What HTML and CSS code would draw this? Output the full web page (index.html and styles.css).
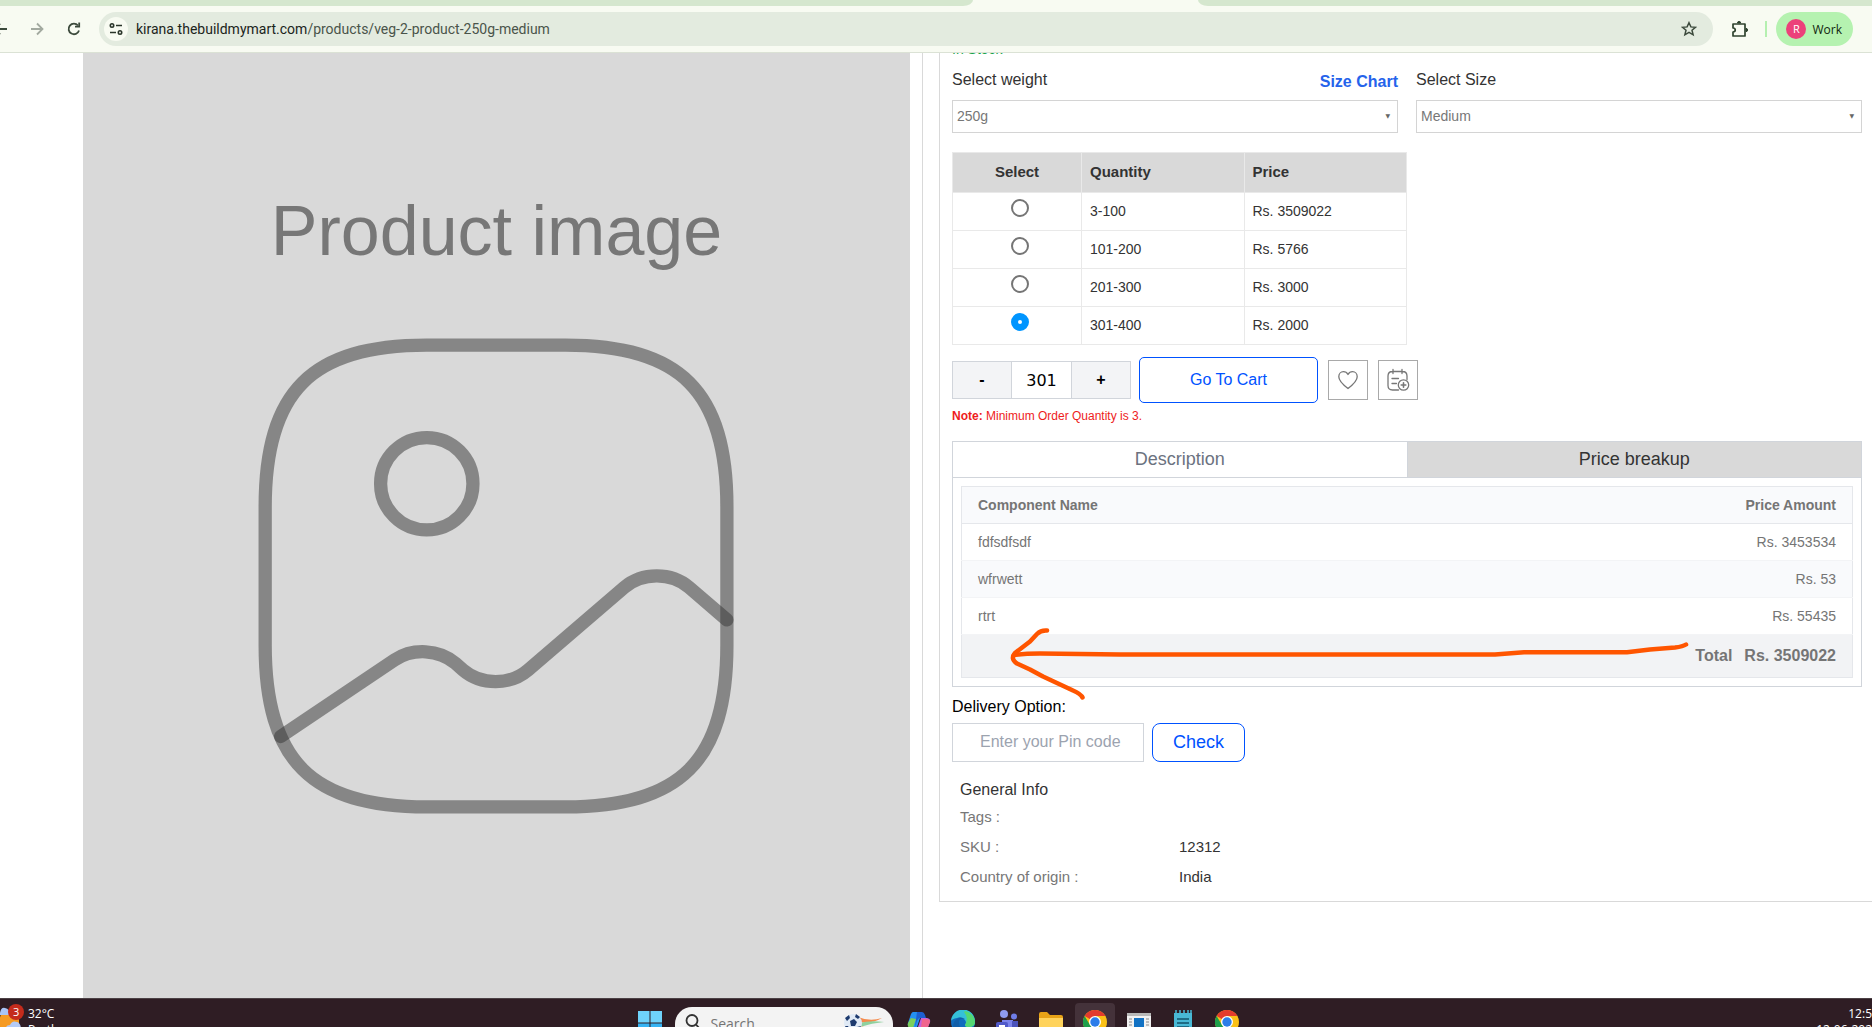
FILE: index.html
```html
<!DOCTYPE html>
<html lang="en">
<head>
    <meta charset="UTF-8">
    <meta name="viewport" content="width=device-width, initial-scale=1.0">
    <title>Veg 2 product 250g medium</title>
    <link rel="stylesheet" href="styles.css">
</head>
<body>
    <header class="browser">
        <div class="tab-strip"><div class="strip-left"></div><div class="strip-right"></div></div>
        <div class="toolbar">
            <div class="nav">
                <button class="nav-btn" aria-label="Back">
                    <svg width="16" height="16" viewBox="0 0 16 16" fill="none" stroke="#3c4a3c" stroke-width="2"><path d="M15 8H3M8 2.500L2.500 8 8 13.500"/></svg>
                </button>
                <button class="nav-btn" aria-label="Forward">
                    <svg width="16" height="16" viewBox="0 0 16 16" fill="none" stroke="#a3aaa0" stroke-width="1.800"><path d="M2 8h11M8 2.500L13.500 8 8 13.500"/></svg>
                </button>
                <button class="nav-btn" aria-label="Reload">
                    <svg width="16" height="16" viewBox="0 0 16 16" fill="none" stroke="#3c4a3c" stroke-width="1.800"><path d="M13 9.500A5.300 5.300 0 1 1 12 4.500"/><path d="M13.200 1.500v4.200H9"/></svg>
                </button>
            </div>
            <div class="address">
                <span class="site-info">
                    <svg width="14" height="14" viewBox="0 0 14 14" fill="none" stroke="#2a352a" stroke-width="1.600"><circle cx="3" cy="3.500" r="1.700"/><path d="M7 3.500h6M1 10.500h6"/><circle cx="11" cy="10.500" r="1.700"/></svg>
                </span>
                <span class="url">kirana.thebuildmymart.com<span class="path">/products/veg-2-product-250g-medium</span></span>
                <svg class="star" width="16" height="16" viewBox="0 0 16 16" fill="none" stroke="#3c4a3c" stroke-width="1.500"><path d="M8 1.700l1.900 4.200 4.600.4-3.500 3 1.100 4.500L8 11.400l-4.100 2.400L5 9.300l-3.500-3 4.600-.4z"/></svg>
            </div>
            <svg class="puzzle" width="18" height="18" viewBox="0 0 18 18" fill="none" stroke="#2f432f" stroke-width="1.700" stroke-linejoin="round"><path d="M2 4h12v12H2v-4c3-.3 3-3.700 0-4z"/><path d="M6.500 3a1.600 1.600 0 0 1 3.200 0zM15 8.400a1.600 1.600 0 0 1 0 3.200z" fill="#2f432f" stroke-width="1"/></svg>
            <span class="divider"></span>
            <button class="profile"><span class="avatar">R</span>Work</button>
        </div>
    </header>

    <main class="page">
        <section class="gallery">
            <figure class="product-image">
                <figcaption>Product image</figcaption>
                <svg viewBox="0 0 24 24" fill="none" stroke="#333" stroke-opacity=".5" stroke-width=".575" stroke-linecap="round" stroke-linejoin="round">
                    <path d="M9 22h6c5 0 7-2 7-7V9c0-5-2-7-7-7H9C4 2 2 4 2 9v6c0 5 2 7 7 7z"/>
                    <circle cx="9" cy="8" r="2"/>
                    <path d="M2.670 18.950l4.930-3.310c.79-.53 1.930-.47 2.640.14l.33.29c.78.67 2.040.67 2.820 0l4.160-3.570c.78-.67 2.040-.67 2.820 0L22 13.900"/>
                </svg>
            </figure>
        </section>

        <section class="details">
            <div class="card">
                <p class="stock">In Stock</p>

                <div class="options">
                    <div class="option">
                        <div class="option-head">
                            <label for="weight">Select weight</label>
                            <a href="#" class="size-chart">Size Chart</a>
                        </div>
                        <div class="select-box">
                            <select id="weight"><option>250g</option></select>
                        </div>
                    </div>
                    <div class="option">
                        <div class="option-head">
                            <label for="size">Select Size</label>
                        </div>
                        <div class="select-box">
                            <select id="size"><option>Medium</option></select>
                        </div>
                    </div>
                </div>

                <table class="tiers">
                    <thead>
                        <tr><th class="pick">Select</th><th>Quantity</th><th>Price</th></tr>
                    </thead>
                    <tbody>
                        <tr><td class="pick"><input type="radio" name="tier" aria-label="3-100"></td><td>3-100</td><td>Rs. 3509022</td></tr>
                        <tr><td class="pick"><input type="radio" name="tier" aria-label="101-200"></td><td>101-200</td><td>Rs. 5766</td></tr>
                        <tr><td class="pick"><input type="radio" name="tier" aria-label="201-300"></td><td>201-300</td><td>Rs. 3000</td></tr>
                        <tr><td class="pick"><input type="radio" name="tier" aria-label="301-400" checked></td><td>301-400</td><td>Rs. 2000</td></tr>
                    </tbody>
                </table>

                <div class="buy-row">
                    <div class="quantity">
                        <button class="step">-</button>
                        <input type="text" value="301" aria-label="Quantity">
                        <button class="step">+</button>
                    </div>
                    <button class="cart-btn">Go To Cart</button>
                    <div class="icon-group">
                        <button class="icon-btn" aria-label="Add to wishlist">
                            <svg width="24" height="24" viewBox="0 0 24 24" fill="none" stroke="#777" stroke-width="1.300" stroke-linejoin="round"><path d="M12 20.500C8 17.500 2.800 13.500 2.800 8.800c0-3 2-5.100 4.600-5.100 2 0 3.600 1 4.600 2.800 1-1.800 2.600-2.800 4.600-2.800 2.600 0 4.600 2.100 4.600 5.100 0 4.700-5.200 8.700-9.200 11.700z"/></svg>
                        </button>
                        <button class="icon-btn" aria-label="Add to calendar">
                            <svg width="24" height="24" viewBox="0 0 24 24" fill="none" stroke="#777" stroke-width="1.300" stroke-linecap="round"><path d="M12.500 22H6.500Q2 22 2 17.500V8q0-4.500 4.500-4.500h10Q21 3.500 21 8v3.500M7 1.500v4M16 1.500v4M6 10.500h6.500M6 15.500h4.500"/><circle cx="17.500" cy="17" r="5.200"/><path d="M17.500 14.700v4.600M15.200 17h4.600" stroke-width="1.600"/></svg>
                        </button>
                    </div>
                </div>
                <p class="note"><b>Note:</b> Minimum Order Quantity is 3.</p>

                <div class="tabs">
                    <button class="tab">Description</button>
                    <button class="tab active">Price breakup</button>
                </div>
                <div class="panel">
                    <table class="breakup">
                        <thead>
                            <tr><th>Component Name</th><th>Price Amount</th></tr>
                        </thead>
                        <tbody>
                            <tr><td>fdfsdfsdf</td><td>Rs. 3453534</td></tr>
                            <tr><td>wfrwett</td><td>Rs. 53</td></tr>
                            <tr><td>rtrt</td><td>Rs. 55435</td></tr>
                        </tbody>
                        <tfoot>
                            <tr><td colspan="2"><span class="total">Total</span>Rs. 3509022</td></tr>
                        </tfoot>
                    </table>
                    <!-- hand drawn arrow over the total row -->
                    <svg class="arrow" width="690" height="80" viewBox="0 0 690 80" fill="none" stroke="#ff5500" stroke-width="4.500" stroke-linecap="round" stroke-linejoin="round">
                        <path d="M47 10.500Q41 10 37 14L30 21.500 15 33Q10 39 17 43.500L30 49.500 43 56.500 73 70.500Q81 74 82.500 77.500"/>
                        <path d="M14 35Q25 33.500 40 33.500L120 34.500H495L524 32.300H627L650 29.500 675 27.500Q683 26.500 686 24.500"/>
                    </svg>
                </div>

                <label class="delivery-label" for="pin">Delivery Option:</label>
                <div class="delivery">
                    <input type="text" id="pin" placeholder="Enter your Pin code">
                    <button class="check-btn">Check</button>
                </div>

                <div class="info">
                    <h2>General Info</h2>
                    <dl>
                        <dt>Tags :</dt><dd></dd>
                        <dt>SKU :</dt><dd>12312</dd>
                        <dt>Country of origin :</dt><dd>India</dd>
                    </dl>
                </div>
            </div>
        </section>
    </main>

    <footer class="taskbar">
        <div class="weather">
            <svg width="28" height="30" viewBox="0 0 28 30">
                <rect x="0" y="8" width="19" height="20" rx="6" fill="#f59a23"/>
                <path d="M0 9q1-6 5-5 5 1 5 7H0z" fill="#a9c4f5"/>
                <path d="M6 26q-1-5 4-5 2-5 7-3 4 1 4 8z" fill="#b4cbf7"/>
                <circle cx="16" cy="8" r="8" fill="#c42b1c"/>
            </svg>
            <span class="badge">3</span>
            <div class="weather-text">32°C<br>Partly</div>
        </div>
        <div class="apps">
            <svg class="app start" width="24" height="24" viewBox="0 0 24 24"><path fill="#6fd3fb" d="M0 0h11.500v11.500H0zM12.500 0H24v11.500H12.500z"/><path fill="#36b3f3" d="M0 12.500h11.500V24H0zM12.500 12.500H24V24H12.500z"/></svg>
            <div class="search">
                <svg width="16" height="16" viewBox="0 0 16 16" fill="none" stroke="#333" stroke-width="1.800"><circle cx="7" cy="6.500" r="5.500"/><path d="M11 10.500l3.500 4"/></svg>
                <label for="search" hidden>Search</label>
                <input id="search" type="text" placeholder="Search">
                <svg width="42" height="22" viewBox="0 0 42 22">
                    <path d="M15 4q12 5 24 1-10 6-24 4z" fill="#f58a4b"/><path d="M16 10q12-3 25-1-12 1-24 5z" fill="#8fd19e"/><path d="M15 13q10 1 22 6-12-2-22-2z" fill="#f7a35c"/>
                    <circle cx="10" cy="10" r="9" fill="#dfe9f5"/><path d="M7 8l4-2 3 3-2 4-4 0zM2 5l4-3 1 3-3 3zM13 1l4 3-2 2-3-2zM2 13l3 0 2 4-2 1zM14 14l4-1-2 4-3 1z" fill="#1d3a6e"/>
                </svg>
            </div>
            <svg class="app" width="24" height="24" viewBox="0 0 24 24"><path d="M6 2h9l-5 15H3q-3 0-2-4L4 4q1-2 2-2z" fill="#2490f0"/><path d="M10 2h5q2 0 3 3l1 3h-6q-2 0-3 3l-2 6z" fill="#1c5fd0"/><path d="M1 13l3-5 5 1-3 9H3q-3-1-2-5z" fill="#7ccf5a"/><path d="M14 8h6q4 1 3 4l-3 8q-1 3-4 3H9z" fill="#c061e0"/><path d="M15 9h5q3 0 3 3l-2 5h-7z" fill="#f0658d"/></svg>
            <svg class="app" width="24" height="24" viewBox="0 0 24 24"><circle cx="12" cy="12" r="12" fill="#0f6cbd"/><path d="M0 11A12 12 0 0 1 24 12q0 5-6 5-4 0-4-2 2-2 0-5-3-4-8-2-5 1-6 3z" fill="#35c1d8"/><path d="M14 1a12 12 0 0 1 10 11q0 5-6 5-4 0-4-2 4-7-1-13z" fill="#54d873"/><path d="M8 12q0 8 8 11-12 2-14-6 0-7 6-9 3-1 6 1-6-1-6 3z" fill="#115ea8"/></svg>
            <svg class="app" width="24" height="24" viewBox="0 0 24 24"><circle cx="9" cy="4" r="4" fill="#8f9bf0"/><circle cx="19" cy="6.500" r="3" fill="#6f7de8"/><path d="M7 10h11v14H7z" fill="#7b83eb"/><path d="M17 11h6v12h-6z" fill="#4b53bc"/><rect x="1" y="12" width="12" height="12" rx="2" fill="#5059c9"/><path d="M4 16h6M7 16v6" stroke="#fff" stroke-width="2"/></svg>
            <svg class="app" width="24" height="24" viewBox="0 0 24 24"><path d="M0 4q0-2 2-2h6l3 3h11q2 0 2 2v4H0z" fill="#e8a317"/><path d="M0 8h24v14H0z" fill="#ffd35c"/><path d="M5 18h14v6H5z" fill="#2b88d8"/></svg>
            <span class="app current"><svg width="24" height="24" viewBox="0 0 24 24"><circle cx="12" cy="12" r="12" fill="#fbc116"/><path d="M12 12L1.600 6A12 12 0 0 1 22.400 6H12z" fill="#e33b2e"/><path d="M1.600 6A12 12 0 0 0 12 24l5-9-5 2-5-2z" fill="#1e9e4a"/><circle cx="12" cy="12" r="6" fill="#fff"/><circle cx="12" cy="12" r="4.700" fill="#2b7de9"/></svg></span>
            <svg class="app" width="24" height="24" viewBox="0 0 24 24"><path d="M0 3h24v21H0z" fill="#f2f2f2"/><path d="M0 3h24v3H0z" fill="#b8b8b8"/><path d="M7 8h10v16H7z" fill="#1272c4"/><path d="M2 9h3M2 12h3M2 15h3M2 18h3M19 9h3M19 12h3M19 15h3M19 18h3" stroke="#888"/></svg>
            <svg class="app" width="24" height="24" viewBox="0 0 24 24"><path d="M3 3h18v21H3z" fill="#49b9d6"/><path d="M5 0v5M9 0v5M13 0v5M17 0v5M20 0v5" stroke="#49b9d6" stroke-width="1.500"/><path d="M6 9h12M6 13h12M6 17h12" stroke="#12536b" stroke-width="1.500"/></svg>
            <svg class="app" width="24" height="24" viewBox="0 0 24 24"><circle cx="12" cy="12" r="12" fill="#fbc116"/><path d="M12 12L1.600 6A12 12 0 0 1 22.400 6H12z" fill="#e33b2e"/><path d="M1.600 6A12 12 0 0 0 12 24l5-9-5 2-5-2z" fill="#1e9e4a"/><circle cx="12" cy="12" r="6" fill="#fff"/><circle cx="12" cy="12" r="4.700" fill="#2b7de9"/></svg>
        </div>
        <div class="clock">12:5<br>12-06-202</div>
    </footer>
</body>
</html>
```

FILE: styles.css
```css
* {
    box-sizing: border-box;
}
body {
    margin: 0;
    height: 100vh;
    display: flex;
    flex-direction: column;
    overflow: hidden;
    background-color: #fff;
    color: #333;
    font-family: "Liberation Sans", Arial, sans-serif;
    font-size: 16px;
    line-height: 24px;
}
p, h2, dl, dd, figure {
    margin: 0;
}
button, input, select {
    margin: 0;
    padding: 0;
    font-family: inherit;
    background: none;
    border: none;
}
svg {
    display: block;
    flex: none;
}

/* browser */
.browser {
    flex: none;
    border-bottom: 1px solid #dbe2d5;
    background-color: #f8fbf2;
    font-family: "Open Sans", "Noto Sans", sans-serif;
}
.tab-strip {
    display: flex;
    justify-content: space-between;
    height: 6px;
}
.strip-left,
.strip-right {
    background-color: #d5e7ce;
}
.strip-left {
    width: 52%;
    border-bottom-right-radius: 10px 6px;
}
.strip-right {
    width: 36%;
    border-bottom-left-radius: 10px 6px;
}
.toolbar {
    display: flex;
    align-items: center;
    padding: 6px 19px 6px 0;
}
.nav {
    display: flex;
    gap: 21px;
    margin-left: -8px;
    width: 107px;
}
.nav-btn {
    width: 16px;
    height: 16px;
}
.address {
    flex: 1;
    display: flex;
    align-items: center;
    height: 34px;
    padding: 0 16px 0 5px;
    border-radius: 17px;
    background-color: #e3ebdf;
}
.site-info {
    display: flex;
    align-items: center;
    justify-content: center;
    width: 24px;
    height: 24px;
    margin-right: 8px;
    border-radius: 50%;
    background-color: #f8fbf2;
}
.url {
    flex: 1;
    font-family: Roboto, "Open Sans", sans-serif;
    font-size: 14px;
    color: #1b241b;
}
.path {
    color: #4a544a;
}
.puzzle {
    margin-left: 18px;
}
.divider {
    width: 2px;
    height: 16px;
    margin: 0 9px 0 16px;
    background-color: #b5f0b0;
}
.profile {
    display: flex;
    align-items: center;
    gap: 6px;
    height: 34px;
    padding: 0 11px 0 10px;
    border-radius: 17px;
    background-color: #b5f2b0;
    color: #11260f;
    font-size: 12px;
}
.avatar {
    width: 20px;
    height: 20px;
    border-radius: 50%;
    background-color: #ec407a;
    color: #fff;
    font-size: 11px;
    line-height: 20px;
    text-align: center;
}

/* page */
.page {
    flex: 1;
    min-height: 0;
    display: grid;
    grid-template-columns: calc(50% - 13px) 1fr;
    overflow: hidden;
}
.gallery {
    padding: 0 12px 0 83px;
    border-right: 1px solid #d9d9d9;
}
.product-image {
    display: flex;
    flex-direction: column;
    align-items: center;
    height: 100%;
    padding-top: 138px;
    background-color: #d9d9d9;
}
.product-image figcaption {
    font-size: 70px;
    line-height: 80px;
    color: #777;
}
.product-image svg {
    width: 67%;
    margin-top: 28px;
}
.details {
    padding-left: 16px;
}
.card {
    padding: 0 10px 9px 12px;
    border: 1px solid #d9d9d9;
    border-width: 0 0 1px 1px;
}
.stock {
    margin: -14px 0 9px;
    color: #16a34a;
    font-size: 14px;
    line-height: 20px;
}

/* options */
.options {
    display: flex;
    gap: 18px;
}
.option {
    flex: 1;
}
.option-head {
    display: flex;
    justify-content: space-between;
    height: 28px;
    margin-bottom: 4px;
}
.size-chart {
    color: #2563eb;
    font-weight: bold;
    line-height: 28px;
    text-decoration: none;
}
.select-box {
    position: relative;
}
.select-box select {
    display: block;
    width: 100%;
    height: 33px;
    padding: 0 4px 2px;
    border: 1px solid #d4d4d4;
    appearance: none;
    color: #777;
    font-size: 14px;
}
.select-box::after {
    content: "▼";
    position: absolute;
    top: 4px;
    right: 8px;
    color: #666;
    font-family: "DejaVu Sans", sans-serif;
    font-size: 6px;
    pointer-events: none;
}

/* quantity tiers */
.tiers {
    width: 50%;
    margin-top: 19px;
    border-collapse: collapse;
    table-layout: fixed;
    font-size: 14px;
    line-height: 20px;
}
.tiers th,
.tiers td {
    height: 38px;
    padding: 0 8px 2px;
    border: 1px solid #e9e9e9;
    text-align: left;
}
.tiers th {
    height: 40px;
    background-color: #d9d9d9;
    font-size: 15px;
}
.tiers .pick {
    width: 129px;
    text-align: center;
}
.tiers td.pick {
    padding: 0 8px 7px 14px;
}
.pick input {
    display: block;
    width: 18px;
    height: 18px;
    margin: 0 auto;
    border: 2px solid #757575;
    border-radius: 50%;
    appearance: none;
}
.pick input:checked {
    border: 7px solid #0095ff;
    background-color: #fff;
}

/* buy row */
.buy-row {
    display: flex;
    align-items: center;
    gap: 8px;
    margin-top: 12px;
}
.quantity {
    display: flex;
    width: 179px;
    height: 38px;
    border: 1px solid #d1d5db;
}
.step {
    flex: 1;
    background-color: #f3f4f6;
    font-size: 16px;
    font-weight: bold;
}
.quantity input {
    width: 61px;
    border: 1px solid #d1d5db;
    border-width: 0 1px;
    text-align: center;
    font-family: "DejaVu Sans", sans-serif;
    font-size: 16px;
}
.cart-btn {
    width: 179px;
    height: 46px;
    border: 1px solid #0052ff;
    border-radius: 5px;
    color: #0052ff;
    font-size: 16px;
}
.icon-group {
    display: flex;
    gap: 10px;
    padding-left: 2px;
}
.icon-btn {
    display: flex;
    align-items: center;
    justify-content: center;
    width: 40px;
    height: 40px;
    border: 1px solid #a9a9a9;
}
.note {
    margin-top: 4px;
    color: #ee1c1c;
    font-size: 12px;
    line-height: 18px;
}

/* tabs */
.tabs {
    display: flex;
    margin-top: 16px;
    border: 1px solid #d1d5db;
}
.tab {
    flex: 1;
    height: 35px;
    color: #6b7280;
    font-size: 18px;
}
.tab.active {
    border-left: 1px solid #d1d5db;
    background-color: #d9d9d9;
    color: #333;
}
.panel {
    position: relative;
    padding: 8px;
    border: 1px solid #d1d5db;
    border-top: none;
}
.breakup {
    width: 100%;
    border: 1px solid #e5e7eb;
    border-collapse: collapse;
    color: #757575;
    font-size: 14px;
    line-height: 20px;
}
.breakup th,
.breakup td {
    height: 37px;
    padding: 0 16px;
    text-align: left;
}
.breakup tr > :last-child {
    text-align: right;
}
.breakup thead {
    border-bottom: 1px solid #e5e7eb;
    background-color: #f9fafc;
}
.breakup tbody tr {
    border-bottom: 1px solid #f3f4f6;
}
.breakup tbody tr:nth-child(even) {
    background-color: #f9fafc;
}
.breakup tfoot td {
    height: 43px;
    background-color: #f2f3f5;
    font-size: 16px;
    font-weight: bold;
}
.total {
    margin-right: 12px;
}
.arrow {
    position: absolute;
    left: 47px;
    top: 142px;
}

/* delivery */
.delivery-label {
    display: block;
    margin: 8px 0 4px;
    color: #000;
}
.delivery {
    display: flex;
    gap: 8px;
}
.delivery input {
    width: 192px;
    height: 39px;
    padding: 0 0 2px 27px;
    border: 1px solid #d1d5db;
    font-size: 16px;
}
.delivery input::placeholder {
    color: #9ca3af;
}
.check-btn {
    width: 93px;
    height: 39px;
    border: 1px solid #0052ff;
    border-radius: 8px;
    color: #0052ff;
    font-size: 18px;
}
.info {
    margin-top: 16px;
    padding-left: 8px;
}
.info h2 {
    font-size: 16px;
    font-weight: normal;
}
.info dl {
    display: grid;
    grid-template-columns: 219px 1fr;
    font-size: 15px;
    line-height: 30px;
}
.info dt {
    color: #777;
}

/* taskbar */
.taskbar {
    flex: none;
    display: grid;
    grid-template-columns: 1fr auto 1fr;
    height: 29px;
    border-top: 1px solid #4b4145;
    background-color: #2f1d24;
    overflow: hidden;
    color: #fff;
    font-family: "Open Sans", "Noto Sans", sans-serif;
    font-size: 12px;
    line-height: 16px;
}
.weather {
    position: relative;
    display: flex;
    padding-top: 5px;
}
.badge {
    position: absolute;
    left: 13px;
    top: 5px;
    font-size: 11px;
}
.weather-text {
    padding-top: 2px;
}
.apps {
    display: flex;
    gap: 20px;
    padding: 11px 0 0 4px;
}
.start {
    margin: 1px -7px 0 0;
}
.search {
    display: flex;
    gap: 10px;
    width: 218px;
    height: 36px;
    margin: -3px -6px 0 0;
    padding: 7px 8px 0 10px;
    border-radius: 17px;
    background-color: #f3f3f3;
}
.search input {
    flex: 1;
    min-width: 0;
    height: 18px;
    font-size: 14px;
}
.search svg:last-child {
    margin-top: -1px;
}
.current {
    height: 30px;
    margin: -7px -8px 0;
    padding: 7px 8px 0;
    border-radius: 4px;
    background-color: #44323a;
}
.clock {
    padding: 7px 0 0;
    text-align: right;
}
```
